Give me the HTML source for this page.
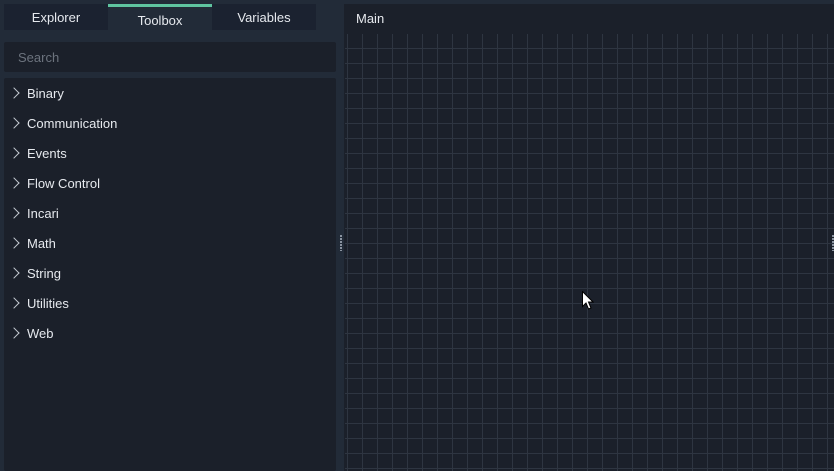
<!DOCTYPE html>
<html style="width:834px;height:471px;overflow:hidden"><head><style>
body{margin:0;width:834px;height:471px;background:#222b38;position:relative;overflow:hidden;font-family:"Liberation Sans",sans-serif;font-size:13px;color:#e6e9ee}
.tab{position:absolute;top:4px;height:26px;width:104px;background:#1b2230;text-align:center;line-height:27px}
.tab.act{background:#222b38;border-top:3px solid #5fc4a0;height:23px;line-height:27px;top:4px}
#search{position:absolute;left:4px;top:42px;width:332px;height:30px;background:#1b202a;border-radius:2px;color:#6c737e;line-height:31px;text-indent:14px}
#list{position:absolute;left:4px;top:78px;width:332px;height:393px;background:#1b202a;border-radius:2px}
.it{height:30px;line-height:31px;padding-left:23px;position:relative}
.it:before{content:"";position:absolute;left:6px;top:11px;width:7px;height:7px;border-right:1px solid #c5cad2;border-top:1px solid #c5cad2;transform:rotate(45deg)}
#main{position:absolute;left:344px;top:4px;width:490px;height:467px;background:#1b202a}
#grid{position:absolute;left:1px;top:30px;right:0;bottom:0;background-color:#1b202a;
background-image:linear-gradient(to right,#2e3541 1px,transparent 1px),linear-gradient(to bottom,#2e3541 1px,transparent 1px);background-size:15px 15px;background-position:2px 14px}
.dots{position:absolute;width:2px;height:16px;background:repeating-linear-gradient(#8a93a0 0 2px,transparent 2px 3px)}
</style></head><body>
<div class="tab" style="left:4px">Explorer</div>
<div class="tab act" style="left:108px">Toolbox</div>
<div class="tab" style="left:212px">Variables</div>
<div id="search">Search</div>
<div id="list">
<div class="it">Binary</div><div class="it">Communication</div><div class="it">Events</div><div class="it">Flow Control</div><div class="it">Incari</div><div class="it">Math</div><div class="it">String</div><div class="it">Utilities</div><div class="it">Web</div>
</div>
<div id="main"><div style="position:absolute;left:12px;top:0;line-height:29px">Main</div><div id="grid"></div></div>
<div class="dots" style="left:340px;top:235px"></div>
<div class="dots" style="left:832px;top:235px"></div>
<svg style="position:absolute;left:582px;top:291px" width="12" height="19" viewBox="0 0 12 19"><path d="M0.5 0.5V15.5L4 12L6.5 18L9 17L6.5 11H11Z" fill="#fff" stroke="#000"/></svg>
</body></html>
